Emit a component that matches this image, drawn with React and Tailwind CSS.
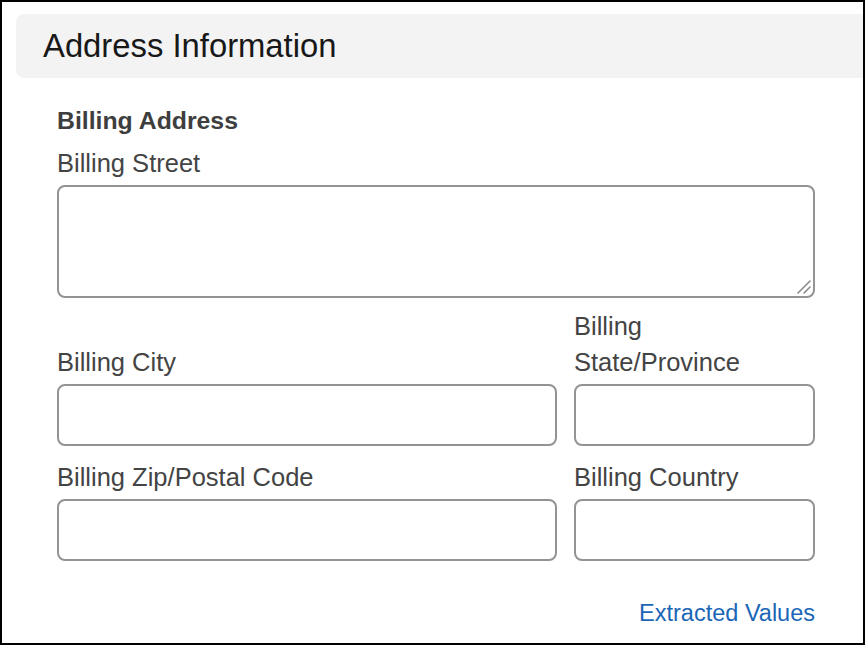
import React from "react";

function Field({ label, className = "" }) {
  return (
    <div className={"flex flex-col justify-end " + className}>
      <div className="text-[25.5px] leading-[36px] text-[#444444]">{label}</div>
      <div className="mt-[4px] h-[62px] rounded-[8px] border-2 border-[#939393] bg-white" />
    </div>
  );
}

export default function App() {
  return (
    <div className="w-[865px] h-[645px] box-border border-2 border-black bg-white flex flex-col font-['Liberation_Sans',Arial,sans-serif]">
      <div className="ml-[14px] mt-[12px] h-[64px] bg-[#f3f3f3] rounded-l-[8px] flex items-center pl-[27px]">
        <h2 className="text-[32.8px] leading-none text-[#181818]">Address Information</h2>
      </div>
      <div className="pl-[55px] pr-[48px] flex flex-col">
        <div className="mt-[25px] text-[24.8px] leading-[36px] font-bold text-[#3e3e3e]">Billing Address</div>
        <div className="mt-[6px] text-[25.5px] leading-[36px] text-[#444444]">Billing Street</div>
        <div className="relative mt-[4px] h-[113px] rounded-[8px] border-2 border-[#939393] bg-white">
          <svg className="absolute right-[1px] bottom-[1px]" width="16" height="16" viewBox="0 0 16 16">
            <line x1="2" y1="14" x2="14" y2="2" stroke="#8a8a8a" strokeWidth="1.6" strokeLinecap="round" />
            <line x1="8" y1="14" x2="14" y2="8" stroke="#8a8a8a" strokeWidth="1.6" strokeLinecap="round" />
          </svg>
        </div>
        <div className="mt-[10px] grid grid-cols-[500px_241px] gap-x-[17px] gap-y-[13px]">
          <Field label="Billing City" />
          <Field label={<>Billing<br />State/Province</>} />
          <Field label="Billing Zip/Postal Code" />
          <Field label="Billing Country" />
        </div>
        <div className="mt-[34px] flex justify-end">
          <a className="text-[23.5px] leading-[36px] text-[#1b66b6]">Extracted Values</a>
        </div>
      </div>
    </div>
  );
}
